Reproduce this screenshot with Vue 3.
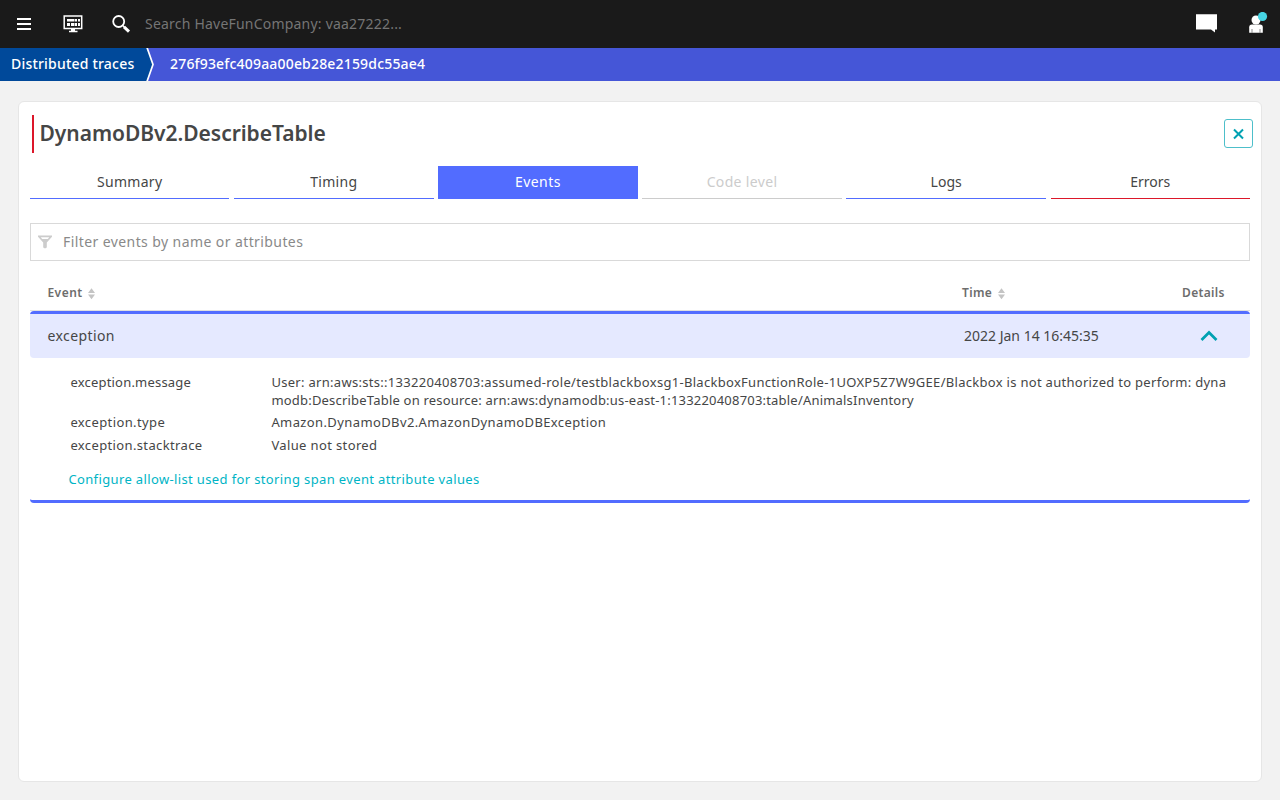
<script setup>
const tabs = [
  { label: 'Summary', kind: '' },
  { label: 'Timing', kind: '' },
  { label: 'Events', kind: 'active' },
  { label: 'Code level', kind: 'disabled' },
  { label: 'Logs', kind: 'logs' },
  { label: 'Errors', kind: 'error' },
]
const attributes = [
  {
    key: 'exception.message',
    lines: [
      'User: arn:aws:sts::133220408703:assumed-role/testblackboxsg1-BlackboxFunctionRole-1UOXP5Z7W9GEE/Blackbox is not authorized to perform: dyna',
      'modb:DescribeTable on resource: arn:aws:dynamodb:us-east-1:133220408703:table/AnimalsInventory',
    ],
  },
  { key: 'exception.type', lines: ['Amazon.DynamoDBv2.AmazonDynamoDBException'] },
  { key: 'exception.stacktrace', lines: ['Value not stored'] },
]
</script>

<template>
  <div class="page">
    <header class="topbar">
      <svg class="menu" width="14" height="13" viewBox="0 0 14 13"><path d="M0 1h14M0 6h14M0 11h14" stroke="#fff" stroke-width="2" /></svg>
      <svg class="dash" width="20" height="18" viewBox="0 0 20 18">
        <path d="M1.200 1h17.500v12.500H1.200z" fill="none" stroke="#fff" stroke-width="1.500" />
        <path d="M4 4h7.500v2.500H4zM12 4h2v2.500h-2zM15 4h2v2.500h-2zM4 8h3v3H4zM8 8h3.500v3H8zM12 8h2v3h-2zM15 8h2v3h-2zM8 13.500h4V16H8zM6 15.800h8.500v1.500H6z" fill="#fff" />
      </svg>
      <svg class="search" width="19" height="18" viewBox="0 0 19 18">
        <circle cx="6.700" cy="6.500" r="5.500" fill="none" stroke="#fff" stroke-width="1.800" />
        <path d="M10.500 10.300l2 2" stroke="#fff" stroke-width="1.500" />
        <path d="M12 11.800l5 4.800" stroke="#fff" stroke-width="3" />
      </svg>
      <span class="query">Search HaveFunCompany: vaa27222...</span>
      <svg class="chat" width="22" height="19" viewBox="0 0 22 19"><path d="M0 .3h21v15.200h-2v3L15 15.500H0z" fill="#fff" /></svg>
      <svg class="user" width="20" height="22" viewBox="0 0 20 22">
        <circle cx="8" cy="8" r="4.500" fill="#fff" />
        <path d="M1.200 20.700v-5.400q0-2.800 2.800-2.800h8q2.800 0 2.800 2.800v5.400z" fill="#fff" />
        <path d="M4 17v3.700M12 17v3.700" stroke="#1a1a1a" stroke-width=".5" />
        <circle cx="14.500" cy="4.500" r="4.600" fill="#47d5e4" />
      </svg>
    </header>
    <nav class="crumbs">
      <span class="crumb-root">Distributed traces</span>
      <svg width="10" height="33" viewBox="0 0 10 33"><path d="M0 0h1l6 16.500L1 33H0z" fill="#00499a" /><path d="M1 -.5l6 17L1 33.500" fill="none" stroke="#fff" stroke-width="1.700" /></svg>
      <span class="crumb-id">276f93efc409aa00eb28e2159dc55ae4</span>
    </nav>
    <main class="card">
      <div class="title-row">
        <h1>DynamoDBv2.DescribeTable</h1>
        <button class="close"><svg width="12" height="12" viewBox="0 0 12 12"><path d="M1 1.500l9 9M10 1.500l-9 9" stroke="#00a1b2" stroke-width="2" /></svg></button>
      </div>
      <div class="tabs">
        <div v-for="t in tabs" :key="t.label" class="tab" :class="t.kind"><span>{{ t.label }}</span></div>
      </div>
      <div class="filter">
        <svg width="14" height="14" viewBox="0 0 14 14"><path d="M0 .5h14v1.300L8.800 7.500v5L7 13.500l-1.800-1V7.500L0 1.800z" fill="#ccc" /><path d="M2.800 2.200h8.400L9.800 4H4.200z" fill="#fff" /></svg>
        <span>Filter events by name or attributes</span>
      </div>
      <div class="thead">
        <span class="th-event">Event</span>
        <svg class="sort" width="7" height="12" viewBox="0 0 7 12"><path d="M3.500 .3L7 5H0zM3.500 11.200L7 6.500H0z" fill="#c4c4c4" /></svg>
        <div class="th-right">
          <span class="th-time">Time</span>
          <svg class="sort" width="7" height="12" viewBox="0 0 7 12"><path d="M3.500 .3L7 5H0zM3.500 11.200L7 6.500H0z" fill="#c4c4c4" /></svg>
        </div>
        <span class="th-details">Details</span>
      </div>
      <section class="event">
        <div class="event-row">
          <span class="name">exception</span>
          <span class="date">2022 Jan 14 16:45:35</span>
          <svg width="18" height="12" viewBox="0 0 18 12"><path d="M1.500 10L9 2.500l7.500 7.500" fill="none" stroke="#00a1b2" stroke-width="2.700" /></svg>
        </div>
        <dl>
          <div v-for="(a, i) in attributes" :key="a.key" class="attr" :class="'attr-' + i">
            <dt><span>{{ a.key }}</span></dt>
            <dd><span v-for="(l, j) in a.lines" :key="j" :class="'line-' + j">{{ l }}</span></dd>
          </div>
        </dl>
        <a class="configure">Configure allow-list used for storing span event attribute values</a>
      </section>
    </main>
  </div>
</template>

<style>
body { margin: 0; background: #f2f2f2; }
</style>
<style scoped>
.page { height: 800px; overflow: hidden; background: #f2f2f2; font-family: "Noto Sans", "Open Sans", sans-serif; font-size: 14px; color: #454646; white-space: nowrap; }
.page * { box-sizing: border-box; }
svg { display: block; flex: none; }
.topbar { height: 48px; background: #1a1a1a; display: flex; align-items: flex-start; }
.menu { margin: 18px 0 0 17px; }
.dash { margin: 15px 0 0 32px; }
.search { margin: 15px 0 0 29px; }
.query { margin-left: 14px; line-height: 47px; color: #757575; letter-spacing: .21px; }
.chat { margin: 14px 0 0 auto; }
.user { margin: 12px 12px 0 30px; }
.crumbs { height: 33px; background: #4556d7; display: flex; color: #fff; font-weight: 500; line-height: 32px; }
.crumb-root { width: 146px; padding-left: 11px; background: #00499a; letter-spacing: .2px; }
.crumb-id { margin-left: 14px; letter-spacing: .18px; }
.card { margin: 20px 18px 0; height: 681px; background: #fff; border: 1px solid #e6e6e6; border-radius: 6px; padding: 13px 11px 0; }
.title-row { height: 38px; display: flex; justify-content: space-between; margin: 0 -3px 0 2px; border-left: 2px solid #dc172a; padding-left: 5.500px; }
h1 { margin: 0; font-size: 21px; line-height: 36px; font-weight: 600; letter-spacing: -.04px; }
.close { width: 29px; height: 29px; margin-top: 4px; padding: 0; display: flex; align-items: center; justify-content: center; border: 1px solid #4dbfca; border-radius: 3px; background: #fff; }
.tabs { display: grid; grid-template-columns: repeat(6, 1fr); column-gap: 4.700px; margin-top: 13px; }
.tab { height: 33px; line-height: 31px; text-align: center; border-bottom: 1px solid #526cff; letter-spacing: .3px; }
.active { background: #526cff; color: #fff; letter-spacing: .45px; }
.disabled { color: #ccc; border-color: #ccc; letter-spacing: .35px; }
.logs, .error { letter-spacing: 0; }
.error { border-color: #dc172a; }
.filter { margin-top: 24px; height: 38px; border: 1px solid #d9d9d9; display: flex; align-items: center; padding-left: 7px; color: #898989; letter-spacing: .41px; }
.filter svg { margin-right: 11px; }
.filter span { line-height: 36px; }
.thead { height: 50px; display: flex; align-items: center; padding: 14px 25px 0 17.400px; font-size: 12px; font-weight: 600; color: #6d6d6d; border-bottom: 1px solid #e0e0e0; letter-spacing: .35px; }
.th-event { letter-spacing: .5px; }
.sort { margin: 2px 0 0 5.400px; }
.th-right { display: flex; align-items: center; width: 220px; margin-left: auto; }
.th-details { width: 43px; }
.event { height: 192px; border-top: 3px solid #526cff; border-bottom: 3px solid #526cff; border-radius: 4px; }
.event-row { height: 44px; background: #e5e9ff; border-radius: 0 0 4px 4px; display: flex; align-items: center; padding: 0 32px 0 17.500px; }
.event-row span { line-height: 20px; }
.name { letter-spacing: .4px; }
.date { margin-left: auto; width: 236px; }
dl { margin: 15px 0 0 40.400px; font-size: 13px; line-height: 18px; }
.attr { display: flex; margin-bottom: 5px; letter-spacing: .37px; }
.attr-0 { margin-bottom: 4px; }
.attr-0 dt { letter-spacing: .2px; }
.attr-0 .line-0 { letter-spacing: .295px; }
.attr-0 .line-1 { letter-spacing: .2px; }
.attr-1 { letter-spacing: .39px; }
dt { width: 201px; }
dd { margin: 0; }
dd span { display: block; width: max-content; }
.configure { display: inline-block; margin: 11px 0 0 38.400px; font-size: 13px; line-height: 18px; color: #00b4c5; letter-spacing: .365px; }
</style>
